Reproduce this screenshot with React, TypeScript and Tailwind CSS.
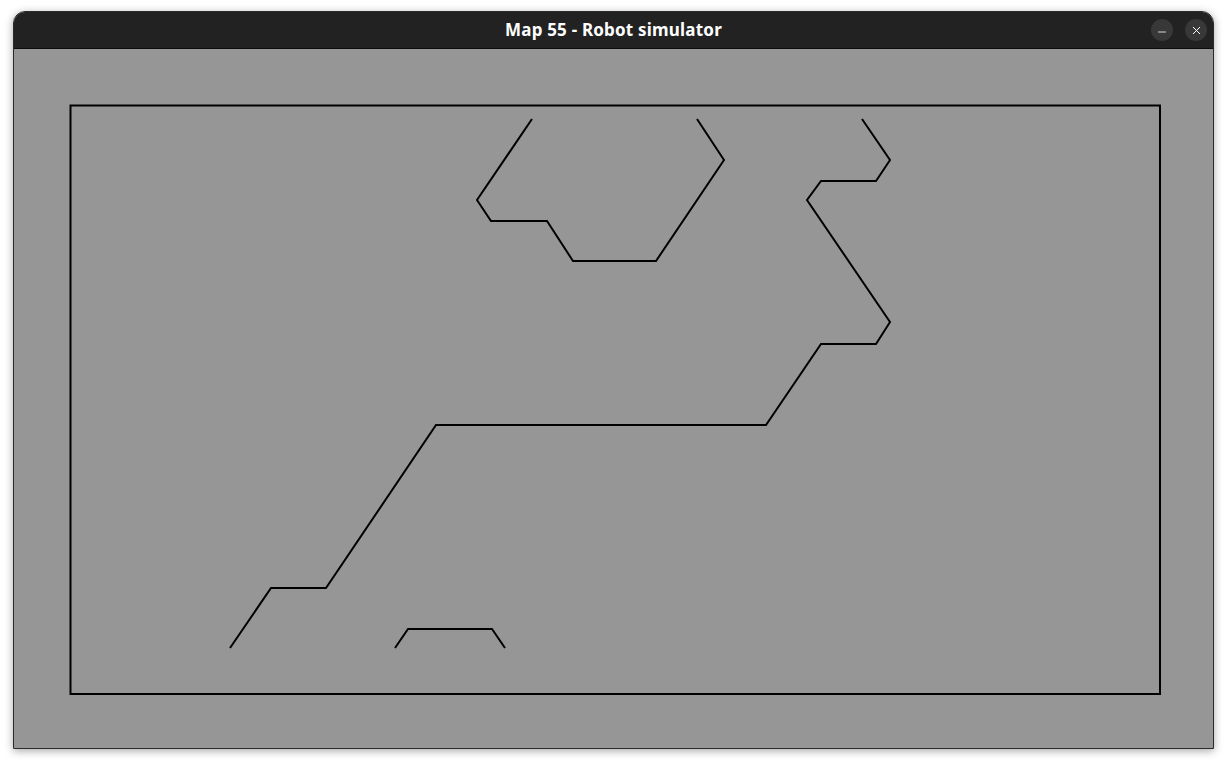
import { Minus, X } from 'lucide-react';

// canvas paths in page coordinates (viewBox offset matches the content area origin)
const paths = [
  '532,119 477,200 491,221 547,221 573,261 656,261 724,160 697,119',
  '862,119 890,160 876,181 821,181 807,200 890,322 876,344 821,344 766,425 436,425 326,588 271,588 230,648',
  '395,648 408,629 492,629 505,648',
];

export default function App() {
  return (
    <div className="w-[1228px] h-[766px] bg-white pl-[13px] pt-[11px] overflow-hidden">
      <div className="w-[1201px] h-[738px] flex flex-col rounded-t-[12px] overflow-hidden border border-[#2b2b2b] shadow-[0_2px_8px_rgba(0,0,0,0.35)]">
        {/* Title bar */}
        <div className="h-[37px] shrink-0 bg-[#222222] border-b border-[#0d0d0d] flex items-center relative">
          <div
            className="flex-1 text-center text-white text-[17px] font-bold tracking-[0.2px]"
            style={{ fontFamily: '"Noto Sans", "Open Sans", sans-serif' }}
          >
            Map 55 - Robot simulator
          </div>
          <div className="absolute right-[6px] top-[7px] flex gap-[12px]">
            <div className="w-[22px] h-[22px] rounded-full bg-[#383838] flex items-center justify-center text-white">
              <Minus size={12} strokeWidth={1.6} className="translate-y-[2px]" />
            </div>
            <div className="w-[22px] h-[22px] rounded-full bg-[#383838] flex items-center justify-center text-white">
              <X size={13} strokeWidth={1.8} />
            </div>
          </div>
        </div>

        {/* Map canvas */}
        <div className="flex-1 bg-[#969696]">
          <svg width="1199" height="700" viewBox="14 49 1199 700" className="block">
            <rect x="70.5" y="105.5" width="1089.5" height="588.5" fill="none" stroke="#000" strokeWidth="2" />
            {paths.map((p, i) => (
              <polyline key={i} points={p} fill="none" stroke="#000" strokeWidth="2" />
            ))}
          </svg>
        </div>
      </div>
    </div>
  );
}
